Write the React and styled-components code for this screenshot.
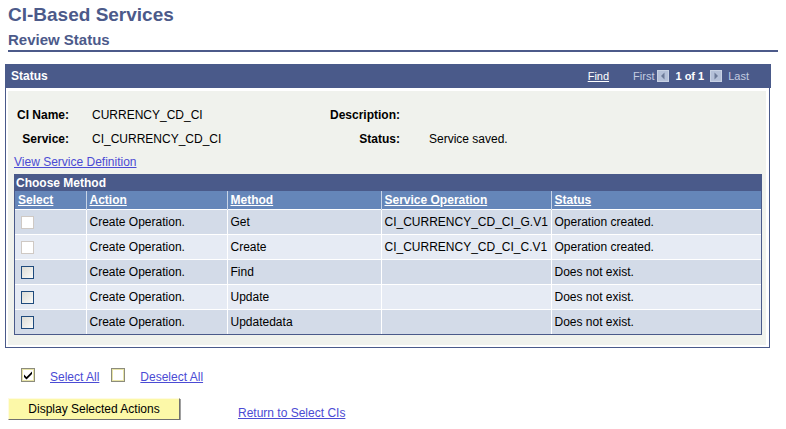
import React from 'react';
import styled, { createGlobalStyle } from 'styled-components';

const GlobalStyle = createGlobalStyle`
  body {
    margin: 0;
    background: #fff;
    font-family: "Liberation Sans", Arial, sans-serif;
    font-size: 12px;
    color: #000;
  }
`;

const Page = styled.div`
  width: 786px;
  padding-top: 4px;
`;

const Title = styled.h1`
  margin: 0 0 0 8px;
  font-size: 19px;
  font-weight: bold;
  color: #4c5a8a;
  line-height: 22px;
`;

const SubTitle = styled.h2`
  margin: 6px 8px 0 8px;
  padding-bottom: 2px;
  font-size: 15px;
  font-weight: bold;
  color: #4c5a8a;
  line-height: 16px;
  border-bottom: 2px solid #4c5a8a;
`;

const Panel = styled.div`
  margin: 12px 0 0 5px;
  width: 763px;
  border: 1px solid #4a5a8a;
  border-top: none;
`;

const PanelHeader = styled.div`
  display: flex;
  align-items: center;
  height: 24px;
  margin-left: -1px;
  margin-right: -2px;
  padding-left: 6px;
  background: #4a5a8a;
  color: #fff;
  font-weight: bold;
`;

const HeaderTitle = styled.span`
  flex: 1;
`;

const Nav = styled.div`
  display: flex;
  align-items: center;
  padding-right: 22px;
  font-weight: normal;
  font-size: 11px;
  color: #c4cce0;
`;

const FindLink = styled.a`
  color: #fff;
  text-decoration: underline;
  margin-right: 24px;
`;

const Count = styled.span`
  color: #fff;
  font-weight: bold;
  font-size: 11px;
  margin: 0 6px;
`;

const Arrow = styled.svg`
  margin-left: ${({ dir }) => (dir === 'left' ? 3 : 0)}px;
  margin-right: ${({ dir }) => (dir === 'left' ? 0 : 6)}px;
`;

const PanelBody = styled.div`
  padding: 3px 3px 2px 2px;
`;

const Inner = styled.div`
  background: #f0f2ed;
  padding: 12px 4px 10px 6px;
`;

const Fields = styled.div`
  display: grid;
  grid-template-columns: 55px 251px 80px 1fr;
  grid-auto-rows: 24px;
  align-items: center;
`;

const Label = styled.div`
  font-weight: bold;
  text-align: right;
`;

const Value = styled.div`
  padding-left: ${({ pad }) => pad}px;
`;

const Link = styled.a`
  color: #4b4bd4;
  text-decoration: underline;
  cursor: pointer;
`;

const DefLink = styled(Link)`
  display: block;
  margin-top: 3px;
  line-height: 16px;
`;

const Grid = styled.div`
  margin-top: 4px;
  width: 746px;
  border: 1px solid #4a5a8a;
`;

const GridTitle = styled.div`
  background: #4a5a8a;
  color: #fff;
  font-weight: bold;
  height: 16px;
  line-height: 16px;
  padding-left: 1px;
`;

const Table = styled.table`
  width: 100%;
  border-collapse: collapse;
  table-layout: fixed;
`;

const Th = styled.th`
  background: #6586b9;
  color: #fff;
  font-weight: bold;
  text-align: left;
  height: 18px;
  padding: 0 0 0 3px;
  border-left: 1px solid #c8d4e6;
  text-decoration: underline;
  &:first-child {
    border-left: none;
  }
`;

const Td = styled.td`
  background: ${({ alt }) => (alt ? '#e6ebf4' : '#d3dbe8')};
  height: 24px;
  padding: 0 0 0 3px;
  border-left: 1px solid #fff;
  border-top: 1px solid #fff;
  white-space: nowrap;
  &:first-child {
    border-left: none;
    padding-left: 6px;
  }
`;

const Box = styled.span`
  display: block;
  width: 11px;
  height: 11px;
  border: 1px solid ${({ disabled }) => (disabled ? '#cfc9c4' : '#1f4b7d')};
  background: ${({ disabled }) =>
    disabled ? '#fff' : 'linear-gradient(135deg, #dcdcd6 0%, #fbfbf8 100%)'};
`;

const Actions = styled.div`
  display: flex;
  align-items: flex-end;
  margin: 20px 0 0 21px;
  height: 16px;
`;

const SmallBox = styled.svg`
  align-self: flex-start;
  margin-right: 15px;
`;

const ActionLink = styled(Link)`
  margin-right: 12px;
  line-height: 14px;
`;

const Footer = styled.div`
  display: flex;
  align-items: flex-end;
  margin: 14px 0 0 8px;
`;

const Button = styled.button`
  width: 172px;
  height: 22px;
  background: #fcf8a8;
  border: 1px solid #fffbe0;
  border-right-color: #707070;
  border-bottom-color: #707070;
  box-shadow: 1px 1px 0 #a0a0a0;
  font-family: "Liberation Sans", Arial, sans-serif;
  font-size: 12px;
  color: #000;
  padding: 0;
  margin-right: 58px;
`;

const rows = [
  { method: 'Get', op: 'CI_CURRENCY_CD_CI_G.V1', status: 'Operation created.', disabled: true },
  { method: 'Create', op: 'CI_CURRENCY_CD_CI_C.V1', status: 'Operation created.', disabled: true },
  { method: 'Find', op: '', status: 'Does not exist.' },
  { method: 'Update', op: '', status: 'Does not exist.' },
  { method: 'Updatedata', op: '', status: 'Does not exist.' },
];

const NavArrow = ({ dir }) => (
  <Arrow dir={dir} width="12" height="12" viewBox="0 0 12 12">
    <rect x="0" y="0" width="12" height="12" fill="#b4c0d8" />
    <rect x="0.5" y="0.5" width="11" height="11" fill="none" stroke="#c8d2e4" />
    {dir === 'left' ? (
      <polygon points="7.5,2.5 7.5,9.5 4,6" fill="#6c7a98" />
    ) : (
      <polygon points="4.5,2.5 4.5,9.5 8,6" fill="#6c7a98" />
    )}
  </Arrow>
);

const CheckIcon = ({ checked }) => (
  <SmallBox width="14" height="14" viewBox="0 0 14 14">
    <rect x="0.5" y="0.5" width="13" height="13" fill="#fff" stroke="#8c8c7c" />
    <rect x="1.5" y="1.5" width="11" height="11" fill="none" stroke="#e8e4a8" />
    {checked && (
      <path d="M3 6.5 L5.5 9 L11 3.5 L11 6 L5.5 11.5 L3 9 Z" fill="#000" />
    )}
  </SmallBox>
);

const App = () => {
  return (
    <Page>
      <GlobalStyle />
      <Title>CI-Based Services</Title>
      <SubTitle>Review Status</SubTitle>
      <Panel>
        <PanelHeader>
          <HeaderTitle>Status</HeaderTitle>
          <Nav>
            <FindLink>Find</FindLink>
            First
            <NavArrow dir="left" />
            <Count>1 of 1</Count>
            <NavArrow dir="right" />
            Last
          </Nav>
        </PanelHeader>
        <PanelBody>
          <Inner>
            <Fields>
              <Label>CI Name:</Label>
              <Value pad={23}>CURRENCY_CD_CI</Value>
              <Label>Description:</Label>
              <Value pad={29}></Value>
              <Label>Service:</Label>
              <Value pad={23}>CI_CURRENCY_CD_CI</Value>
              <Label>Status:</Label>
              <Value pad={29}>Service saved.</Value>
            </Fields>
            <DefLink>View Service Definition</DefLink>
            <Grid>
              <GridTitle>Choose Method</GridTitle>
              <Table>
                <colgroup>
                  <col style={{ width: 71 }} />
                  <col style={{ width: 141 }} />
                  <col style={{ width: 154 }} />
                  <col style={{ width: 170 }} />
                  <col />
                </colgroup>
                <thead>
                  <tr>
                    <Th>Select</Th>
                    <Th>Action</Th>
                    <Th>Method</Th>
                    <Th>Service Operation</Th>
                    <Th>Status</Th>
                  </tr>
                </thead>
                <tbody>
                  {rows.map((r, i) => (
                    <tr key={r.method}>
                      <Td alt={i % 2 === 1}>
                        <Box disabled={r.disabled} />
                      </Td>
                      <Td alt={i % 2 === 1}>Create Operation.</Td>
                      <Td alt={i % 2 === 1}>{r.method}</Td>
                      <Td alt={i % 2 === 1}>{r.op}</Td>
                      <Td alt={i % 2 === 1}>{r.status}</Td>
                    </tr>
                  ))}
                </tbody>
              </Table>
            </Grid>
          </Inner>
        </PanelBody>
      </Panel>
      <Actions>
        <CheckIcon checked />
        <ActionLink>Select All</ActionLink>
        <CheckIcon />
        <ActionLink>Deselect All</ActionLink>
      </Actions>
      <Footer>
        <Button>Display Selected Actions</Button>
        <Link>Return to Select CIs</Link>
      </Footer>
    </Page>
  );
};

export default App;
